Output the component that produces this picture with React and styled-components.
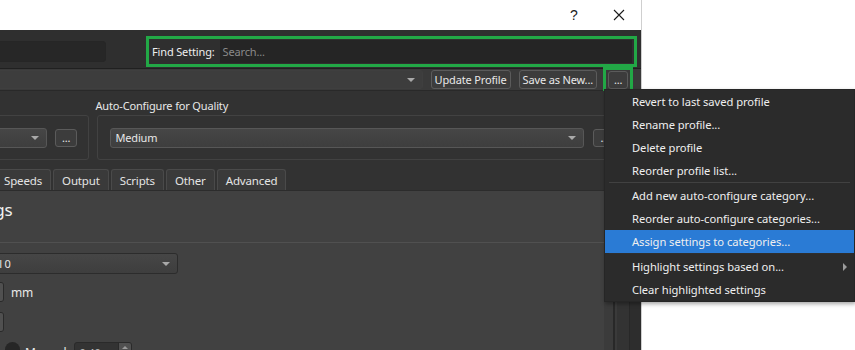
import React from "react";
import styled, { createGlobalStyle } from "styled-components";

const Global = createGlobalStyle`
  html, body { margin: 0; padding: 0; background: #ffffff; }
  body { font-family: "Noto Sans", "Open Sans", sans-serif; font-size: 11px; }
  * { box-sizing: border-box; }
`;

const Page = styled.div`
  position: relative;
  width: 855px;
  height: 350px;
  overflow: hidden;
  background: #ffffff;
`;

const Window = styled.div`
  width: 642px;
  height: 350px;
  display: flex;
  flex-direction: column;
  border-right: 1px solid #cfcfcf;
  overflow: hidden;
`;

const TitleBar = styled.div`
  height: 30px;
  flex: none;
  background: #ffffff;
  display: flex;
  align-items: center;
  justify-content: flex-end;
  padding-right: 8px;
`;

const TitleButton = styled.div`
  width: 28px;
  height: 22px;
  display: flex;
  align-items: center;
  justify-content: center;
  margin-left: ${(p) => p.$gap || 0}px;
  color: #1a1a1a;
  font-family: "Liberation Sans", sans-serif;
  font-size: 14px;
`;

const Body = styled.div`
  flex: 1;
  display: flex;
  flex-direction: column;
  background: #2f2f2f;
  color: #e6e6e6;
  min-height: 0;
  letter-spacing: -0.15px;
`;

const TopBar = styled.div`
  height: 38px;
  flex: none;
  display: flex;
  align-items: center;
  padding-top: 5px;
  padding-right: 4px;
`;

const LeftField = styled.div`
  width: 112px;
  height: 21px;
  margin-left: -6px;
  background: #272727;
  border: 1px solid #262626;
  border-radius: 3px;
`;

const FindBox = styled.div`
  margin-left: 40px;
  flex: 1;
  height: 31px;
  border: 3px solid #22a846;
  display: flex;
  align-items: center;
  padding: 0 2px 0 3px;
`;

const FindLabel = styled.span`
  color: #eeeeee;
  margin-right: 5px;
  white-space: nowrap;
`;

const SearchInput = styled.div`
  flex: 1;
  height: 23px;
  background: #252525;
  color: #8a8a8a;
  display: flex;
  align-items: center;
  padding-left: 3px;
`;

const ProfileBar = styled.div`
  flex: none;
  height: 23px;
  background: #3a3a3a;
  border-top: 1px solid #202020;
  border-bottom: 1px solid #292929;
  display: flex;
  align-items: center;
  padding-right: 8px;
`;

const Combo = styled.div`
  height: ${(p) => p.$h || 20}px;
  width: ${(p) => (p.$w ? `${p.$w}px` : "auto")};
  flex: ${(p) => (p.$grow ? 1 : "none")};
  margin-left: ${(p) => p.$ml || 0}px;
  background: ${(p) => p.$bg || "linear-gradient(#464646, #3e3e3e)"};
  border: 1px solid ${(p) => p.$border || "#575757"};
  border-radius: 3px;
  display: flex;
  align-items: center;
  justify-content: space-between;
  padding: 0 7px 0 4px;
  color: #e8e8e8;
  white-space: nowrap;
`;

const Arrow = styled.span`
  width: 0;
  height: 0;
  border-left: 4px solid transparent;
  border-right: 4px solid transparent;
  border-top: 4px solid #a9a9a9;
`;

const Button = styled.div`
  height: ${(p) => p.$h || 19}px;
  margin-left: ${(p) => p.$ml || 0}px;
  padding: 0 ${(p) => p.$px || 3}px;
  background: #3c3c3c;
  border: 1px solid #5b5b5b;
  border-radius: 3px;
  display: flex;
  align-items: center;
  justify-content: center;
  color: #e8e8e8;
  white-space: nowrap;
  flex: none;
`;

const GreenBox = styled.div`
  margin-left: 6px;
  width: 30px;
  height: 25px;
  margin-top: -1px;
  margin-bottom: -1px;
  border: 3px solid #22a846;
  display: flex;
  align-items: center;
  padding-left: 2px;
  flex: none;
`;

const Content = styled.div`
  flex: 1;
  display: flex;
  min-height: 0;
`;

const Main = styled.div`
  flex: 1;
  display: flex;
  flex-direction: column;
  overflow: hidden;
  min-width: 0;
`;

const Gutter = styled.div`
  flex: none;
  display: flex;
`;

const Strip = styled.div`
  width: ${(p) => p.$w}px;
  background: ${(p) => p.$c};
`;

const ConfigArea = styled.div`
  flex: none;
  height: 77px;
  background: #323232;
  display: flex;
  padding-top: 7px;
`;

const ConfigColumn = styled.div`
  display: flex;
  flex-direction: column;
  margin-left: ${(p) => p.$ml || 0}px;
  flex: ${(p) => (p.$grow ? 1 : "none")};
  min-width: 0;
`;

const GroupLabel = styled.div`
  height: 15px;
  line-height: 15px;
  margin-left: -2px;
  color: #e8e8e8;
  white-space: nowrap;
`;

const Group = styled.div`
  margin-top: 2px;
  height: 45px;
  border: 1px solid #424242;
  border-radius: 3px;
  display: flex;
  align-items: center;
  padding: 0 ${(p) => p.$pr || 0}px 0 ${(p) => p.$pl || 0}px;
  margin-right: ${(p) => p.$mr || 0}px;
`;

const TabBar = styled.div`
  flex: none;
  height: 22px;
  background: #323232;
  display: flex;
  align-items: flex-end;
  gap: 2px;
  margin-left: -5px;
`;

const Tab = styled.div`
  height: 21px;
  padding: 0 8px;
  background: #3a3a3a;
  border: 1px solid #4a4a4a;
  border-bottom: none;
  border-radius: 3px 3px 0 0;
  display: flex;
  align-items: center;
  color: #e4e4e4;
  white-space: nowrap;
  font-size: 11.5px;
`;

const Panel = styled.div`
  flex: 1;
  background: #414141;
  border-top: 1px solid #2c2c2c;
  display: flex;
  flex-direction: column;
  padding-top: 7px;
`;

const Heading = styled.div`
  font-size: 17px;
  line-height: 24px;
  height: 24px;
  color: #f0f0f0;
  margin-left: ${(p) => p.$ml}px;
  white-space: nowrap;
`;

const Divider = styled.div`
  margin-top: 20px;
  height: 1px;
  background: #505050;
`;

const FormRow = styled.div`
  display: flex;
  align-items: center;
  margin-top: ${(p) => p.$mt || 0}px;
  height: ${(p) => p.$h || 20}px;
`;

const Spin = styled.div`
  width: ${(p) => p.$w}px;
  height: 20px;
  margin-left: ${(p) => p.$ml || 0}px;
  background: ${(p) => p.$bg || "#3b3b3b"};
  border: 1px solid #2a2a2a;
  border-radius: 3px;
  display: flex;
  align-items: center;
  justify-content: space-between;
  padding-left: 4px;
  color: #bdbdbd;
  flex: none;
  overflow: hidden;
`;

const SpinButtons = styled.div`
  width: 13px;
  height: 100%;
  background: #505050;
  border-left: 1px solid #2a2a2a;
  display: flex;
  align-items: flex-start;
  justify-content: center;
  padding-top: 3px;
`;

const UpArrow = styled.span`
  width: 0;
  height: 0;
  border-left: 3px solid transparent;
  border-right: 3px solid transparent;
  border-bottom: 3px solid #9a9a9a;
`;

const Unit = styled.span`
  margin-left: ${(p) => p.$ml || 7}px;
  color: #e8e8e8;
  font-size: 12px;
`;

const Radio = styled.span`
  width: 15px;
  height: 15px;
  margin-left: 5px;
  border-radius: 50%;
  background: #262626;
  flex: none;
  align-self: flex-start;
  margin-top: 2px;
`;

const Menu = styled.div`
  position: absolute;
  left: 604px;
  top: 89px;
  width: 251px;
  background: #2b2b2b;
  border: 1px solid #262626;
  box-shadow: 1px 2px 4px rgba(0, 0, 0, 0.35);
  display: flex;
  flex-direction: column;
  color: #efefef;
  font-size: 11.2px;
  letter-spacing: -0.05px;
`;

const MenuItem = styled.div`
  height: 23px;
  display: flex;
  align-items: center;
  justify-content: space-between;
  padding: 0 7px 0 27px;
  background: ${(p) => (p.$active ? "#2a7bd5" : "transparent")};
  white-space: nowrap;
`;

const MenuSep = styled.div`
  height: 2px;
  margin: 0 4px;
  border-top: 1px solid ${(p) => (p.$faint ? "#2f2f2f" : "#414141")};
`;

const SubArrow = styled.span`
  width: 0;
  height: 0;
  border-top: 4px solid transparent;
  border-bottom: 4px solid transparent;
  border-left: 4px solid #9c9c9c;
`;

const menuGroups = [
  ["Revert to last saved profile", "Rename profile...", "Delete profile", "Reorder profile list..."],
  ["Add new auto-configure category...", "Reorder auto-configure categories...", "Assign settings to categories..."],
  ["Highlight settings based on...", "Clear highlighted settings"],
];

const tabs = ["Speeds", "Output", "Scripts", "Other", "Advanced"];

export default function App() {
  return (
    <Page>
      <Global />
      <Window>
        <TitleBar>
          <TitleButton>?</TitleButton>
          <TitleButton $gap={17}>
            <svg width="12" height="12" viewBox="0 0 12 12">
              <path d="M1 1 L11 11 M11 1 L1 11" stroke="#1a1a1a" strokeWidth="1.1" fill="none" />
            </svg>
          </TitleButton>
        </TitleBar>
        <Body>
          <TopBar>
            <LeftField />
            <FindBox>
              <FindLabel>Find Setting:</FindLabel>
              <SearchInput>Search...</SearchInput>
            </FindBox>
          </TopBar>
          <ProfileBar>
            <Combo $grow $ml={-4} $h={19} $bg="#3d3d3d" $border="#3f3f3f">
              <span />
              <Arrow />
            </Combo>
            <Button $ml={8}>Update Profile</Button>
            <Button $ml={8}>Save as New...</Button>
            <GreenBox>
              <Button $h={18} $px={5}>...</Button>
            </GreenBox>
          </ProfileBar>
          <Content>
            <Main>
              <ConfigArea>
                <ConfigColumn $ml={-20}>
                  <GroupLabel />
                  <Group $pr={11}>
                    <Combo $w={66}>
                      <span />
                      <Arrow />
                    </Combo>
                    <Button $ml={8} $h={18} $px={6}>...</Button>
                  </Group>
                </ConfigColumn>
                <ConfigColumn $ml={8} $grow>
                  <GroupLabel>Auto-Configure for Quality</GroupLabel>
                  <Group $pl={12} $mr={-30}>
                    <Combo $w={474}>
                      <span>Medium</span>
                      <Arrow />
                    </Combo>
                    <Button $ml={9} $h={18} $px={6}>...</Button>
                  </Group>
                </ConfigColumn>
              </ConfigArea>
              <TabBar>
                {tabs.map((t) => (
                  <Tab key={t}>{t}</Tab>
                ))}
              </TabBar>
              <Panel>
                <Heading $ml={-51}>Settings</Heading>
                <Divider />
                <FormRow $mt={10} $h={21}>
                  <Combo $w={202} $ml={-24} $h={21} $border="#2c2c2c">
                    <span>Tool 0</span>
                    <Arrow />
                  </Combo>
                </FormRow>
                <FormRow $mt={8}>
                  <Spin $w={64} $ml={-60}>
                    <span />
                    <SpinButtons />
                  </Spin>
                  <Unit>mm</Unit>
                </FormRow>
                <FormRow $mt={10}>
                  <Spin $w={64} $ml={-60}>
                    <span />
                    <SpinButtons />
                  </Spin>
                </FormRow>
                <FormRow $mt={8} $h={24}>
                  <Radio />
                  <Unit $ml={5}>Manual</Unit>
                  <Spin $w={58} $ml={8} $bg="#333333">
                    <span>0.40</span>
                    <SpinButtons>
                      <UpArrow />
                    </SpinButtons>
                  </Spin>
                </FormRow>
              </Panel>
            </Main>
            <Gutter>
              <Strip $w={9} $c="#3b3b3b" />
              <Strip $w={2} $c="#282828" />
              <Strip $w={2} $c="#3a3a3a" />
              <Strip $w={12} $c="#333333" />
              <Strip $w={1} $c="#282828" />
              <Strip $w={11} $c="#2d2d2d" />
            </Gutter>
          </Content>
        </Body>
      </Window>
      <Menu>
        {menuGroups.map((g, gi) => (
          <React.Fragment key={gi}>
            {gi > 0 && <MenuSep $faint={gi === 2} />}
            {g.map((item) => (
              <MenuItem key={item} $active={item.startsWith("Assign")}>
                <span>{item}</span>
                {item.startsWith("Highlight") && <SubArrow />}
              </MenuItem>
            ))}
          </React.Fragment>
        ))}
      </Menu>
    </Page>
  );
}
